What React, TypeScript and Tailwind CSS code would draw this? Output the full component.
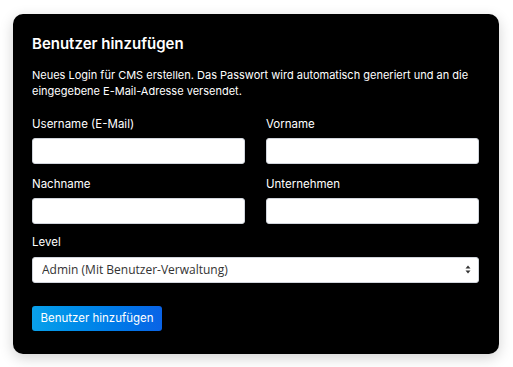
import React from 'react';

const Field: React.FC<{ label: string }> = ({ label }) => (
  <div className="flex flex-col">
    <label className="text-[11.5px] leading-[16px] text-white mb-[6px]">{label}</label>
    <input type="text" className="h-[26px] w-full rounded-[3px] bg-white border border-gray-300 outline-none px-2" />
  </div>
);

export default function App() {
  return (
    <div className="w-[513px] h-[367px] bg-white pl-[13px] pt-[14px]" style={{ fontFamily: '"Inter", "Noto Sans", sans-serif' }}>
      <div className="w-[486px] h-[340px] bg-black rounded-[10px] shadow-[0_4px_14px_rgba(0,0,0,0.18)] pl-[19px] pr-[20px] pt-[20px]">
        <h2 className="text-[15px] leading-[20px] font-semibold text-white">Benutzer hinzufügen</h2>
        <p className="mt-[13px] text-[11px] leading-[16px] text-white">
          Neues Login für CMS erstellen. Das Passwort wird automatisch generiert und an die eingegebene E-Mail-Adresse versendet.
        </p>
        <div className="mt-[17px] grid grid-cols-2 gap-x-[21px] gap-y-[12px]">
          <Field label="Username (E-Mail)" />
          <Field label="Vorname" />
          <Field label="Nachname" />
          <Field label="Unternehmen" />
        </div>
        <div className="mt-[10px] flex flex-col">
          <label className="text-[11.5px] leading-[16px] text-white mb-[6px]">Level</label>
          <div className="relative">
            <select
              defaultValue="admin"
              className="h-[26px] w-full appearance-none rounded-[3px] bg-white border border-gray-300 outline-none pl-[9px] text-[12px] text-[#333]"
              style={{ fontFamily: '"Open Sans", "Liberation Sans", sans-serif' }}
            >
              <option value="admin">Admin (Mit Benutzer-Verwaltung)</option>
              <option value="user">Benutzer</option>
            </select>
            <svg className="pointer-events-none absolute right-[8px] top-[9px]" width="6" height="9" viewBox="0 0 6 9">
              <path d="M3 0.5 L5.5 3.5 H0.5 Z" fill="#333" />
              <path d="M3 8.5 L5.5 5.5 H0.5 Z" fill="#333" />
            </svg>
          </div>
        </div>
        <button className="mt-[23px] h-[25px] w-[130px] rounded-[3px] bg-gradient-to-r from-[#0aa0ea] to-[#0a63e6] text-white text-[11.5px]">
          Benutzer hinzufügen
        </button>
      </div>
    </div>
  );
}
